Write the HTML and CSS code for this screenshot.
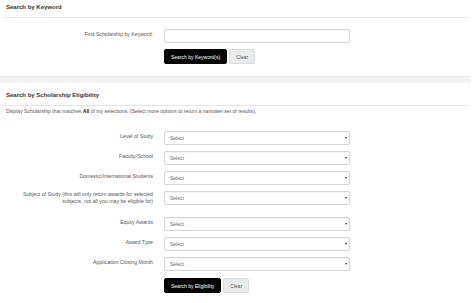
FILE: index.html
```html
<!DOCTYPE html>
<html lang="en">
<head>
    <meta charset="UTF-8">
    <meta name="viewport" content="width=device-width, initial-scale=1.0">
    <title>Scholarship Search</title>
    <link rel="stylesheet" href="styles.css">
</head>
<body>
    <div class="panel">
        <h2 class="panel-title">Search by Keyword</h2>
        <form class="panel-body">
            <div class="form-row">
                <label for="keyword">Find Scholarship by Keyword:</label>
                <input id="keyword" type="text" class="form-control">
            </div>
            <div class="form-row">
                <span></span>
                <div class="actions">
                    <button type="button" class="btn btn-dark">Search by Keyword(s)</button>
                    <button type="reset" class="btn btn-light">Clear</button>
                </div>
            </div>
        </form>
    </div>

    <div class="divider"></div>

    <div class="panel">
        <h2 class="panel-title">Search by Scholarship Eligibility</h2>
        <form class="panel-body">
            <p class="intro">Display Scholarship that matches <strong>All</strong> of my selections. (Select more options to return a narrower set of results).</p>

            <div class="form-row">
                <label>Level of Study</label>
                <div class="select-wrap"><select class="form-control"><option>Select</option></select></div>
            </div>
            <div class="form-row">
                <label>Faculty/School</label>
                <div class="select-wrap"><select class="form-control"><option>Select</option></select></div>
            </div>
            <div class="form-row">
                <label>Domestic/International Students</label>
                <div class="select-wrap"><select class="form-control"><option>Select</option></select></div>
            </div>
            <div class="form-row form-row-tall">
                <label>Subject of Study (this will only return awards for selected subjects, not all you may be eligible for)</label>
                <div class="select-wrap"><select class="form-control"><option>Select</option></select></div>
            </div>
            <div class="form-row">
                <label>Equity Awards</label>
                <div class="select-wrap"><select class="form-control"><option>Select</option></select></div>
            </div>
            <div class="form-row">
                <label>Award Type</label>
                <div class="select-wrap"><select class="form-control"><option>Select</option></select></div>
            </div>
            <div class="form-row">
                <label>Application Closing Month</label>
                <div class="select-wrap"><select class="form-control"><option>Select</option></select></div>
            </div>
            <div class="form-row">
                <span></span>
                <div class="actions">
                    <button type="button" class="btn btn-dark">Search by Eligibility</button>
                    <button type="reset" class="btn btn-light">Clear</button>
                </div>
            </div>
        </form>
    </div>
</body>
</html>
```

FILE: styles.css
```css
body {
    margin: 0;
    background: #fff;
    font-family: "Liberation Sans", Arial, sans-serif;
    font-size: 5px;
    line-height: 7px;
    color: #444;
}
.panel {
    margin: 0 5px 0 3px;
    padding-top: 5px;
}
.panel:first-child {
    padding-top: 0;
}
.panel-title {
    margin: 0;
    padding: 3px 3px 6px;
    font-size: 6px;
    line-height: 8px;
    font-weight: bold;
    color: #333;
    border-bottom: 1px solid #e6e6e6;
}
.panel-body {
    padding: 11px 0 6px;
}
.panel:last-child .panel-body {
    padding-top: 2px;
}
.divider {
    height: 6px;
    background: #f3f3f3;
    border-top: 1px solid #e9e9e9;
    margin: 0 3px 0 0;
}
.intro {
    margin: 0 0 16px 3px;
    font-size: 5.1px;
    color: #555;
}
.intro strong {
    color: #222;
}
.form-row {
    display: grid;
    grid-template-columns: 150px 186px;
    column-gap: 11px;
    align-items: start;
    margin-bottom: 6px;
}
.form-row label {
    text-align: right;
    padding: 2px 0 0 12px;
    font-size: 5.2px;
    color: #555;
}
.form-row-tall {
    margin-bottom: 12px;
}
.form-row-tall label {
    padding-top: 0;
    line-height: 6.5px;
}
.form-control {
    display: block;
    box-sizing: border-box;
    width: 100%;
    height: 14px;
    margin: 0;
    padding: 0 5px;
    border: 1px solid #d4d4d4;
    border-radius: 2px;
    background: #fff;
    font-family: inherit;
    font-size: 5px;
    color: #666;
    box-shadow: inset 0 1px 1px rgba(0,0,0,0.04);
}
select.form-control {
    appearance: none;
    -webkit-appearance: none;
    outline: none;
}
.select-wrap {
    position: relative;
}
.select-wrap::after {
    content: "";
    position: absolute;
    right: 3px;
    top: 6px;
    border-left: 1.5px solid transparent;
    border-right: 1.5px solid transparent;
    border-top: 2px solid #333;
}
.actions {
    display: flex;
    gap: 2px;
}
.btn {
    height: 15px;
    padding: 0 6px;
    border-radius: 2px;
    font-family: inherit;
    font-size: 5px;
    cursor: pointer;
}
.btn-dark {
    background: #050505;
    color: #fff;
    border: 1px solid #000;
}
.btn-light {
    background: #e8eaec;
    color: #555;
    border: 1px solid #dcdcdc;
}
.panel:last-child .actions {
    margin-top: 1px;
}
```
